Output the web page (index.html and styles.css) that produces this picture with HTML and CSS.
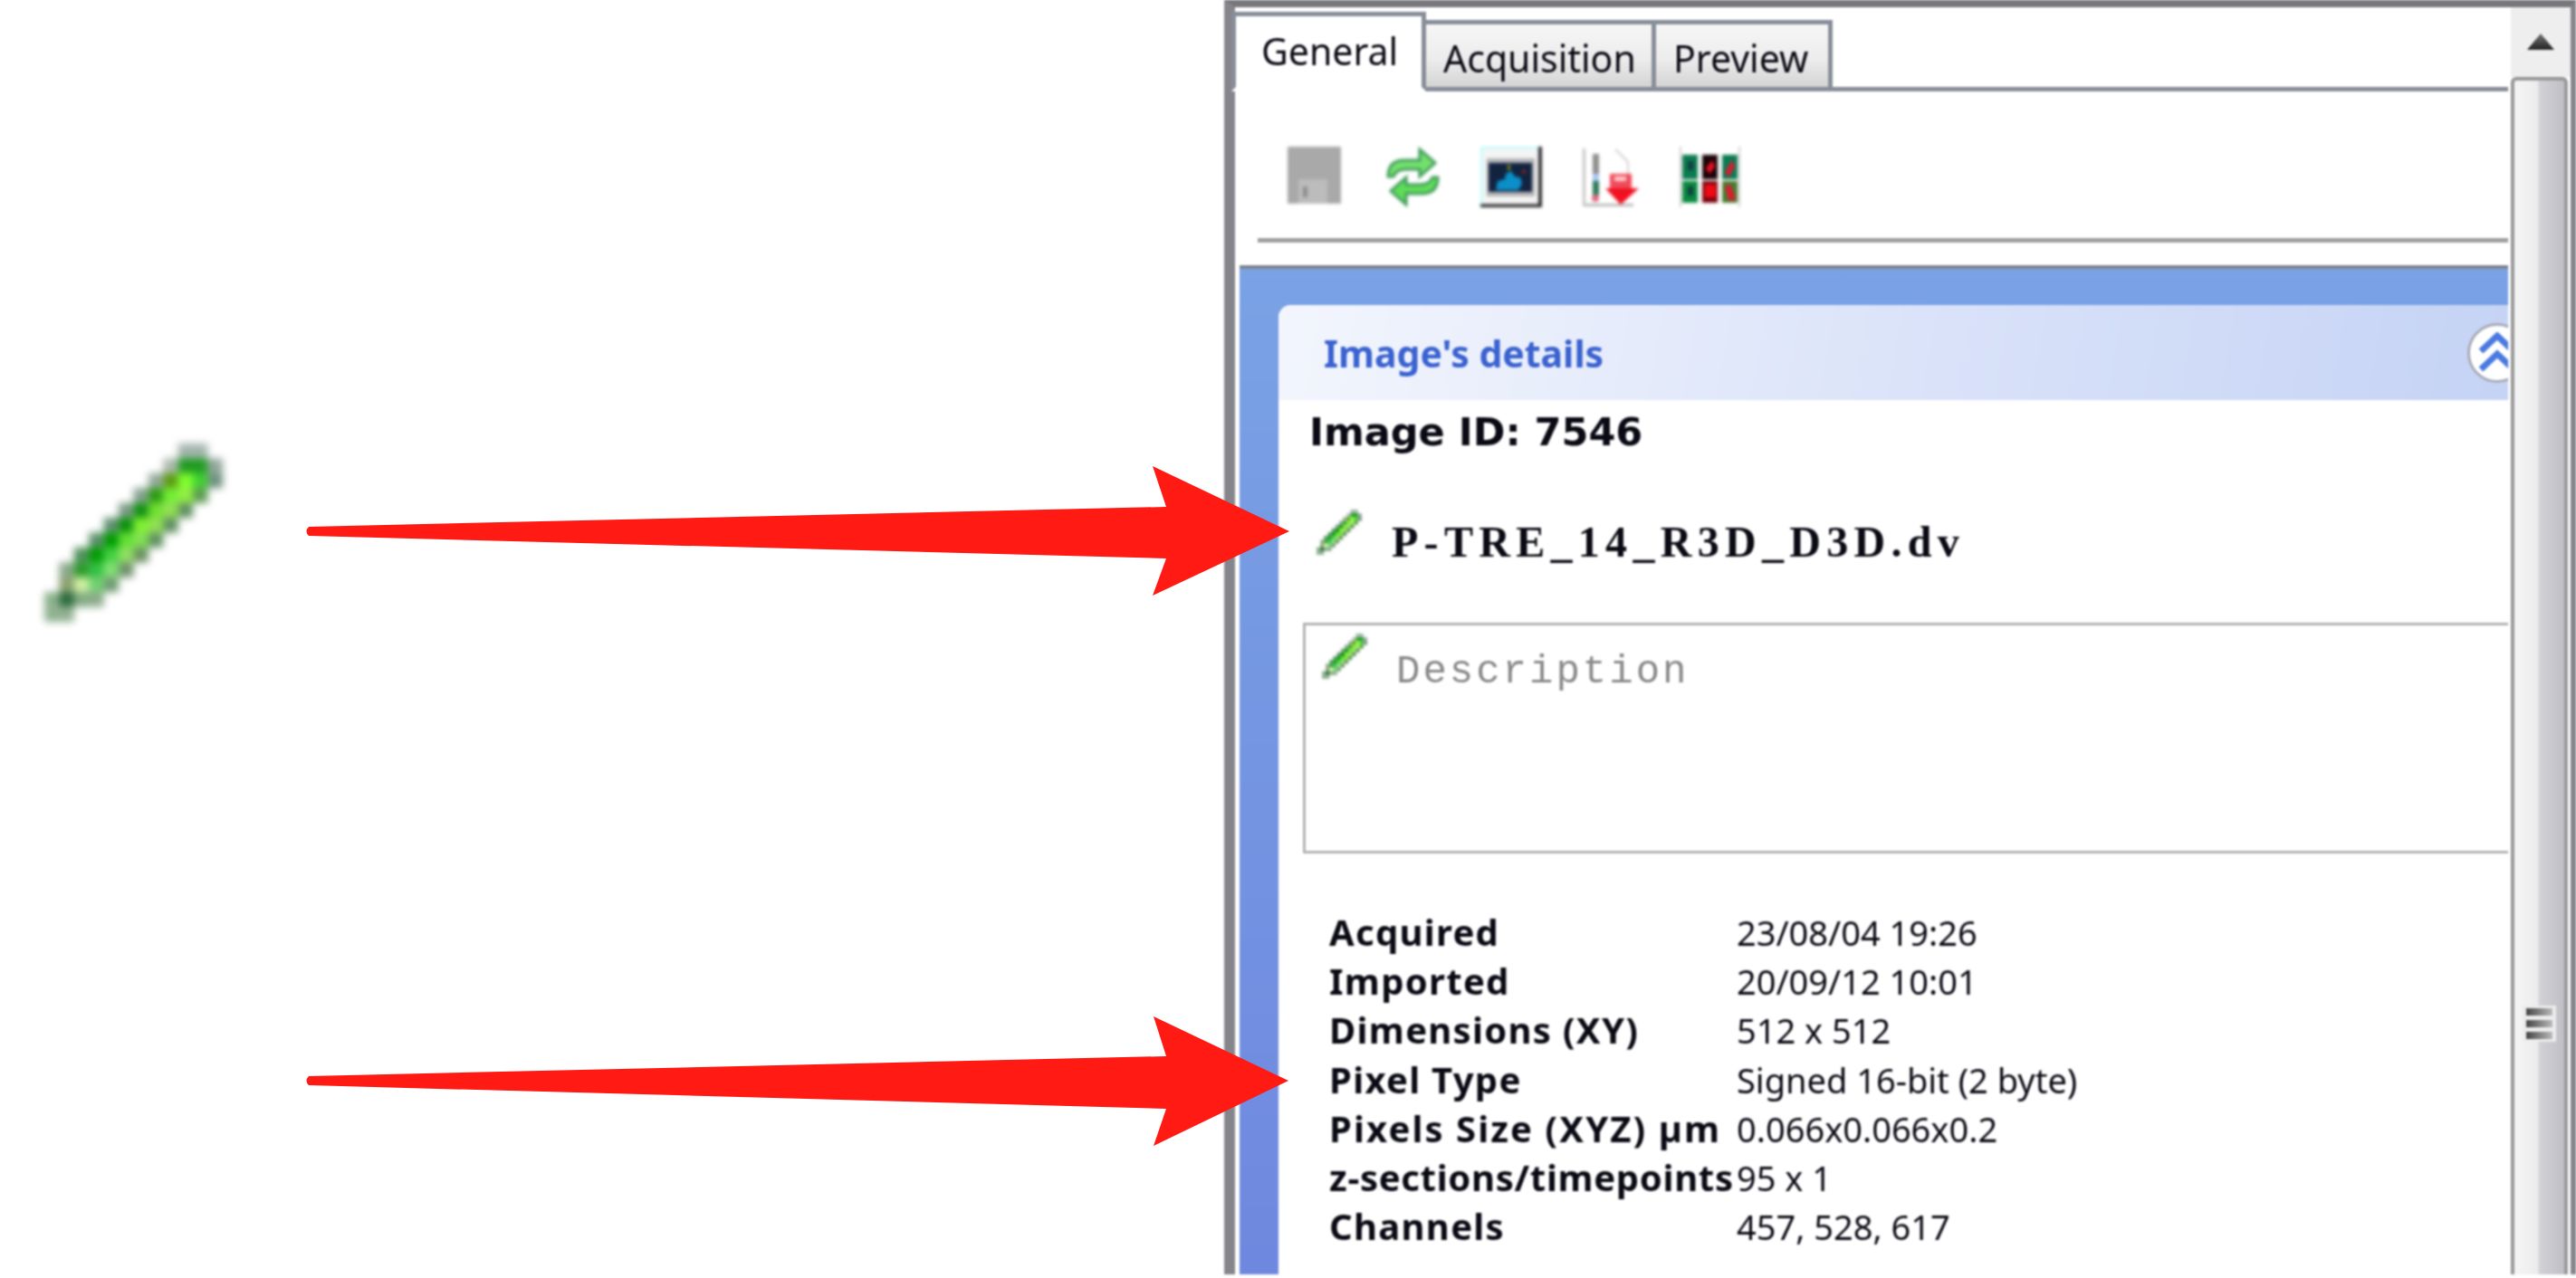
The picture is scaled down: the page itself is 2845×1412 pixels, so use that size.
FILE: index.html

```html
<!DOCTYPE html>
<html>
<head>
  <title>Image details</title>
  <link rel="stylesheet" href="styles.css">
</head>
<body>

  <svg class="hidden-defs" width="0" height="0">
    <symbol id="pencil" viewBox="0 0 12 12">
      <rect x="9" y="0" width="2" height="1" fill="#a3b4ac"/>
      <rect x="8" y="1" width="1" height="1" fill="#aeb8b0"/>
      <rect x="9" y="1" width="2" height="1" fill="#1f9a20"/>
      <rect x="11" y="1" width="1" height="1" fill="#93a69c"/>
      <rect x="7" y="2" width="1" height="1" fill="#93a89c"/>
      <rect x="8" y="2" width="1" height="1" fill="#5a9a10"/>
      <rect x="9" y="2" width="1" height="1" fill="#7fff2a"/>
      <rect x="10" y="2" width="1" height="1" fill="#3fd030"/>
      <rect x="11" y="2" width="1" height="1" fill="#6f9080"/>
      <rect x="6" y="3" width="1" height="1" fill="#86a090"/>
      <rect x="7" y="3" width="1" height="1" fill="#2a9a10"/>
      <rect x="8" y="3" width="1" height="1" fill="#70ee30"/>
      <rect x="9" y="3" width="1" height="1" fill="#90ee40"/>
      <rect x="10" y="3" width="1" height="1" fill="#5a9a50"/>
      <rect x="5" y="4" width="1" height="1" fill="#7a9a85"/>
      <rect x="6" y="4" width="1" height="1" fill="#109010"/>
      <rect x="7" y="4" width="1" height="1" fill="#70e030"/>
      <rect x="8" y="4" width="1" height="1" fill="#90e050"/>
      <rect x="9" y="4" width="1" height="1" fill="#5f8f60"/>
      <rect x="4" y="5" width="1" height="1" fill="#5f8f6f"/>
      <rect x="5" y="5" width="1" height="1" fill="#0a900a"/>
      <rect x="6" y="5" width="1" height="1" fill="#80f030"/>
      <rect x="7" y="5" width="1" height="1" fill="#90e050"/>
      <rect x="8" y="5" width="1" height="1" fill="#5f8f60"/>
      <rect x="3" y="6" width="1" height="1" fill="#5a8f6a"/>
      <rect x="4" y="6" width="1" height="1" fill="#009a00"/>
      <rect x="5" y="6" width="1" height="1" fill="#60e030"/>
      <rect x="6" y="6" width="1" height="1" fill="#80e050"/>
      <rect x="7" y="6" width="1" height="1" fill="#5f9060"/>
      <rect x="2" y="7" width="1" height="1" fill="#4f8f5a"/>
      <rect x="3" y="7" width="1" height="1" fill="#009a00"/>
      <rect x="4" y="7" width="1" height="1" fill="#40d040"/>
      <rect x="5" y="7" width="1" height="1" fill="#90e060"/>
      <rect x="6" y="7" width="1" height="1" fill="#6a9060"/>
      <rect x="1" y="8" width="1" height="1" fill="#8aa88a"/>
      <rect x="2" y="8" width="1" height="1" fill="#2a9a2a"/>
      <rect x="3" y="8" width="1" height="1" fill="#30c040"/>
      <rect x="4" y="8" width="1" height="1" fill="#80e070"/>
      <rect x="5" y="8" width="1" height="1" fill="#6f906a"/>
      <rect x="1" y="9" width="1" height="1" fill="#8a9f70"/>
      <rect x="2" y="9" width="1" height="1" fill="#d0f0a0"/>
      <rect x="3" y="9" width="1" height="1" fill="#70d070"/>
      <rect x="4" y="9" width="1" height="1" fill="#6f9a70"/>
      <rect x="0" y="10" width="1" height="1" fill="#8ab08a"/>
      <rect x="1" y="10" width="1" height="1" fill="#2a6a3a"/>
      <rect x="2" y="10" width="1" height="1" fill="#80aa80"/>
      <rect x="3" y="10" width="1" height="1" fill="#8aaa8a"/>
      <rect x="0" y="11" width="2" height="1" fill="#90b090"/>
    </symbol>
  </svg>

  <div class="left">
    <svg class="pencil-big"><use href="#pencil"/></svg>
  </div>

  <div class="window">
    <div class="pane">
      <div class="tabs">
        <div class="tab active">General</div>
        <div class="tab">Acquisition</div>
        <div class="tab">Preview</div>
      </div>

      <div class="toolbar">
        <svg class="icon" width="59" height="63" viewBox="0 0 59 63">
          <rect width="59" height="63" rx="1" fill="#a9a9a9"/>
          <rect x="12" y="36" width="32" height="27" fill="#bcbcbc"/>
          <rect x="17" y="44" width="5" height="12" fill="#8e8e8e"/>
        </svg>
        <svg class="icon" width="59" height="67" viewBox="0 0 59 67">
          <path d="M2 33 C2 19 10 15 20 15 L37 15 L37 3 L54 18 L37 33 L37 25 L22 25 C14 25 10 28 8 33 Z" fill="#74e06c" stroke="#3f9a5a" stroke-width="3"/>
          <path d="M57 34 C57 48 49 52 39 52 L22 52 L22 64 L5 49 L22 34 L22 42 L37 42 C45 42 49 39 51 34 Z" fill="#5fdc58" stroke="#3f9a5a" stroke-width="3"/>
        </svg>
        <svg class="icon" width="68" height="67" viewBox="0 0 68 67">
          <rect width="68" height="67" fill="#f4f4f4"/>
          <path d="M1 67 V1 H65" fill="none" stroke="#b8ffff" stroke-width="2"/>
          <path d="M66 0 V65.500 H0" fill="none" stroke="#2c2c30" stroke-width="4"/>
          <rect x="7" y="13" width="53" height="42" fill="#b4b4b8"/>
          <rect x="9" y="18" width="48" height="32" fill="#12233f"/>
          <path d="M17 48 L19 38 L27 36 L28 30 L34 27 L38 33 L44 34 L46 41 L42 48 Z" fill="#0a8fc8"/>
          <rect x="30" y="20" width="3" height="6" fill="#7a8a20"/>
          <rect x="46" y="26" width="4" height="3" fill="#a02020"/>
        </svg>
        <svg class="icon" width="62" height="67" viewBox="0 0 62 67">
          <rect x="0" y="2" width="3" height="64" fill="#c4c4c4"/>
          <rect x="3" y="63" width="53" height="3" fill="#b8b8b8"/>
          <rect x="11" y="8" width="7" height="22" fill="#8e8e8e"/>
          <rect x="11" y="30" width="7" height="8" fill="#a8c8f0"/>
          <rect x="11" y="38" width="7" height="16" fill="#2f7a5a"/>
          <circle cx="14" cy="57" r="4" fill="#e06a80"/>
          <path d="M36 3 L50 17 L50 30" fill="none" stroke="#cfcfcf" stroke-width="2"/>
          <rect x="30" y="30" width="24" height="20" fill="#f04a5a"/>
          <rect x="35" y="33" width="13" height="5" fill="#ffd0d0"/>
          <path d="M25 46 H62 L42 64 Z" fill="#f01020"/>
        </svg>
        <svg class="icon" width="67" height="67" viewBox="0 0 67 67">
          <rect x="0" y="0" width="2" height="67" fill="#d0d0d0"/>
          <rect x="65" y="0" width="2" height="67" fill="#d0d0d0"/>
          <rect x="3" y="9" width="17" height="27" fill="#0a7a50"/>
          <rect x="3" y="38" width="17" height="24" fill="#0a8a40"/>
          <rect x="25" y="9" width="17" height="27" fill="#1a0408"/>
          <rect x="25" y="38" width="17" height="24" fill="#7a0410"/>
          <rect x="47" y="9" width="17" height="27" fill="#0a7a50"/>
          <rect x="47" y="38" width="17" height="24" fill="#4a7a30"/>
          <rect x="9" y="16" width="6" height="10" fill="#123f40"/>
          <rect x="9" y="44" width="6" height="10" fill="#123f40"/>
          <path d="M29 24 L36 15 L39 22 L33 30 Z" fill="#f01020"/>
          <rect x="28" y="42" width="12" height="14" fill="#f00a14"/>
          <path d="M50 28 L58 15 L61 22 L54 34 Z" fill="#e01830"/>
          <path d="M50 44 L56 42 L62 58 L55 60 Z" fill="#e01830"/>
        </svg>
      </div>

      <div class="blue">
        <div class="card">
          <div class="card-head">
            <span class="card-title">Image's details</span>
            <span class="collapse">
              <svg width="44" height="46" viewBox="0 0 44 46">
                <path d="M4 21 L22 4 L40 21 M4 41 L22 24 L40 41" fill="none" stroke="#4a7ae0" stroke-width="7"/>
              </svg>
            </span>
          </div>

          <div class="image-id">Image ID: 7546</div>

          <div class="name-row">
            <svg class="pencil-small"><use href="#pencil"/></svg>
            <span class="file-name">P-TRE_14_R3D_D3D.dv</span>
          </div>

          <div class="desc-box">
            <svg class="pencil-small"><use href="#pencil"/></svg>
            <span class="desc-text">Description</span>
          </div>

          <div class="info">
            <b>Acquired</b><span>23/08/04 19:26</span>
            <b>Imported</b><span>20/09/12 10:01</span>
            <b>Dimensions (XY)</b><span>512 x 512</span>
            <b>Pixel Type</b><span>Signed 16-bit (2 byte)</span>
            <b class="wide">Pixels Size (XYZ) µm</b><span>0.066x0.066x0.2</span>
            <b class="tight">z-sections/timepoints</b><span>95 x 1</span>
            <b>Channels</b><span>457, 528, 617</span>
          </div>
        </div>
      </div>
    </div>

    <div class="scrollbar">
      <div class="scroll-up"><span class="up-arrow"></span></div>
      <div class="thumb">
        <div class="grip"><i></i><i></i><i></i></div>
      </div>
    </div>
  </div>

  <svg class="arrows" width="2845" height="1412" viewBox="0 0 2845 1412">
    <path d="M341 582 L1288 560 L1273 515 L1424 587 L1273 658 L1288 617 L341 592 Q336 587 341 582 Z" fill="#ff1a14"/>
    <path d="M341 1189 L1288 1167 L1274 1123 L1423 1194 L1274 1266 L1288 1225 L341 1199 Q336 1194 341 1189 Z" fill="#ff1a14"/>
  </svg>

</body>
</html>
```

FILE: styles.css

```css
body {
  margin: 0;
  width: 2845px;
  height: 1412px;
  display: flex;
  align-items: flex-start;
  overflow: hidden;
  background: white;
  position: relative;
  font-family: "Noto Sans", sans-serif;
  color: #0a0a14;
}
.hidden-defs {
  position: absolute;
}
.left {
  width: 1352px;
  padding: 490px 0 0 48px;
  box-sizing: border-box;
  flex: none;
}
.pencil-big {
  display: block;
  width: 199px;
  height: 197px;
  filter: blur(4px);
}
.window {
  width: 1493px;
  height: 1408px;
  box-sizing: border-box;
  display: flex;
  border-top: 8px solid #77777c;
  border-left: 12px solid #85858c;
  border-right: 6px solid #85858c;
  filter: blur(0.8px);
}
.pane {
  flex: 1;
  min-width: 0;
  display: flex;
  flex-direction: column;
  padding-right: 3px;
}

/* tabs */
.tabs {
  display: flex;
  align-items: flex-end;
  flex: none;
  height: 93px;
  margin-left: -4px;
  padding-top: 5px;
  box-sizing: border-box;
  border-bottom: 5px solid #888e99;
}
.tab {
  height: 79px;
  box-sizing: border-box;
  padding: 12px 0 0 19px;
  margin-bottom: -5px;
  border: 5px solid #888e99;
  border-left: none;
  background: linear-gradient(#f6f6f6, #ededed 55%, #d4d4d4);
  font-size: 41px;
  line-height: 50px;
  width: 254px;
}
.tab:last-child {
  width: 195px;
}
.tab.active {
  height: 88px;
  width: 215px;
  padding: 13px 0 0 28px;
  background: white;
  border-left: 5px solid #888e99;
  border-bottom: 5px solid white;
}

/* toolbar */
.toolbar {
  flex: none;
  height: 167px;
  box-sizing: border-box;
  margin: 0 0 0 25px;
  padding-top: 61px;
  border-bottom: 5px solid #a0a0a0;
  display: flex;
  align-items: flex-start;
  gap: 45px;
}
.icon {
  flex: none;
  filter: blur(1.5px);
}
.toolbar .icon:first-child {
  margin-left: 33px;
  margin-right: 5px;
}

/* blue area and card */
.blue {
  flex: 1;
  min-height: 0;
  margin: 25px 0 0 5px;
  padding: 40px 0 0 43px;
  overflow: hidden;
  border-top: 4px solid #7f8590;
  background: linear-gradient(#7aa2e5, #6f88df);
}
.card {
  height: 100%;
  background: white;
  border-radius: 14px 0 0 0;
  overflow: hidden;
}
.card-head {
  height: 105px;
  display: flex;
  align-items: center;
  justify-content: space-between;
  padding-left: 50px;
  background: linear-gradient(100deg, #f3f6fd, #d9e2f9 55%, #c5d3f5);
}
.card-title {
  font-family: "Noto Sans", sans-serif;
  font-weight: 700;
  font-size: 41px;
  color: #3a62d0;
}
.collapse {
  flex: none;
  width: 66px;
  height: 66px;
  box-sizing: border-box;
  margin-right: -21px;
  border: 3px solid #a8acb8;
  border-radius: 50%;
  background: white;
  display: flex;
  align-items: center;
  justify-content: center;
}
.image-id {
  margin: 10px 0 0 34px;
  font-family: "DejaVu Sans", sans-serif;
  font-weight: 700;
  font-size: 43px;
  line-height: 50px;
}
.name-row {
  display: flex;
  align-items: flex-start;
  margin: 61px 0 0 42px;
}
.pencil-small {
  flex: none;
  display: block;
  width: 50px;
  height: 50px;
  filter: blur(1px);
}
.file-name {
  margin: 7px 0 0 33px;
  font-family: "Liberation Serif", serif;
  font-weight: 700;
  font-size: 48px;
  line-height: 58px;
  letter-spacing: 6.300px;
}
.desc-box {
  margin: 60px 0 0 27px;
  height: 255px;
  box-sizing: border-box;
  padding: 9px 0 0 18px;
  border: 3px solid #b4b4b4;
  border-right: none;
  display: flex;
  align-items: flex-start;
}
.desc-text {
  margin: 15px 0 0 32px;
  font-family: "Liberation Mono", monospace;
  font-size: 44px;
  line-height: 54px;
  letter-spacing: 3px;
  color: #8a8a8a;
}
.info {
  margin: 60px 0 0 56px;
  display: grid;
  grid-template-columns: 450px 1fr;
  align-items: baseline;
  font-size: 38px;
  line-height: 54.200px;
}
.info b {
  font-weight: 700;
  font-size: 40px;
  letter-spacing: 1.300px;
  white-space: nowrap;
}
.info b.wide {
  letter-spacing: 2.100px;
}
.info b.tight {
  letter-spacing: 0.700px;
}

/* scrollbar */
.scrollbar {
  width: 66px;
  flex: none;
  display: flex;
  flex-direction: column;
  background: white;
}
.scroll-up {
  height: 77px;
  background: #eeeeee;
  display: flex;
  justify-content: center;
  padding-top: 29px;
  box-sizing: border-box;
}
.up-arrow {
  width: 30px;
  height: 18px;
  background: linear-gradient(#777, #222);
  clip-path: polygon(50% 0, 100% 100%, 0 100%);
}
.thumb {
  flex: 1;
  width: 63px;
  box-sizing: border-box;
  border: 4px solid #999999;
  border-bottom: none;
  border-radius: 6px 6px 0 0;
  background: linear-gradient(90deg, #f5f5f5, #ececec 47%, #d2d2d6 50%, #bfbfc5);
  display: flex;
  justify-content: center;
  padding-top: 1022px;
}
.grip {
  width: 29px;
  height: 34px;
  display: flex;
  flex-direction: column;
  gap: 5px;
  padding: 3px 4px;
  background: #ececec;
}
.grip i {
  display: block;
  height: 8px;
  background: linear-gradient(90deg, #444, #bbb);
}

/* the two annotation arrows lie over the panel */
.arrows {
  position: absolute;
  left: 0;
  top: 0;
}
```
